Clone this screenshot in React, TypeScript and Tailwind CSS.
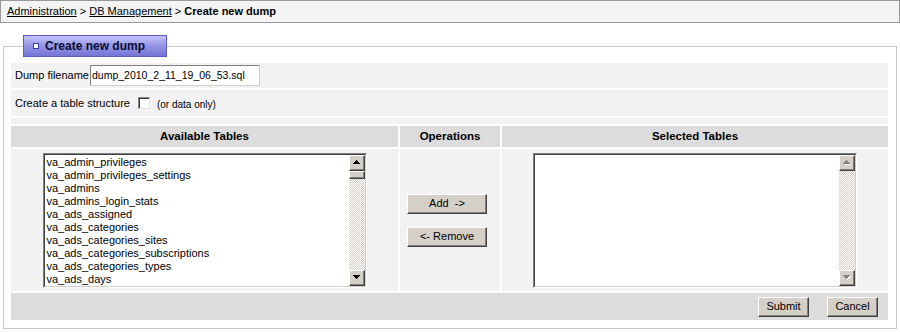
import React from "react";

const tables = [
  "va_admin_privileges",
  "va_admin_privileges_settings",
  "va_admins",
  "va_admins_login_stats",
  "va_ads_assigned",
  "va_ads_categories",
  "va_ads_categories_sites",
  "va_ads_categories_subscriptions",
  "va_ads_categories_types",
  "va_ads_days",
];

const raised =
  "bg-[#d4d0c8] border border-t-white border-l-white border-r-[#404040] border-b-[#404040] shadow-[inset_-1px_-1px_#808080]";

function Arrow({ dir, disabled }: { dir: "up" | "down"; disabled?: boolean }) {
  const rows: [number, number][] = [
    [3, 1],
    [2, 3],
    [1, 5],
    [0, 7],
  ];
  const r = dir === "up" ? rows : [...rows].reverse();
  return (
    <svg width="8" height="5" viewBox="0 0 8 5" shapeRendering="crispEdges">
      {disabled &&
        r.map(([x, w], i) => (
          <rect key={"s" + i} x={x + 1} y={i + 1} width={w} height={1} fill="#ffffff" />
        ))}
      {r.map(([x, w], i) => (
        <rect key={i} x={x} y={i} width={w} height={1} fill={disabled ? "#808080" : "#000000"} />
      ))}
    </svg>
  );
}

function ListBox({ items, disabled }: { items: string[]; disabled?: boolean }) {
  return (
    <div className="w-[324px] h-[135px] border border-t-[#808080] border-l-[#808080] border-r-white border-b-white">
      <div className="h-full flex bg-white border border-t-[#404040] border-l-[#404040] border-r-[#d4d0c8] border-b-[#d4d0c8]">
        <div className="flex-1 overflow-hidden pl-[2px] pt-[1px]">
          {items.map((t) => (
            <div key={t} className="h-[13px] leading-[13px] text-[11px] whitespace-nowrap text-black">
              {t}
            </div>
          ))}
        </div>
        <div className="w-[16px] flex flex-col">
          <div className={raised + " h-[16px] flex items-center justify-center"}>
            <Arrow dir="up" disabled={disabled} />
          </div>
          {!disabled && <div className={raised + " h-[8px]"} />}
          <div className="flex-1 bg-[repeating-conic-gradient(#d4d0c8_0%_25%,#ffffff_0%_50%)] bg-size-[2px_2px]" />
          <div className={raised + " h-[16px] flex items-center justify-center"}>
            <Arrow dir="down" disabled={disabled} />
          </div>
        </div>
      </div>
    </div>
  );
}

function Btn({ children, w }: { children: React.ReactNode; w: string }) {
  return (
    <div className={raised + " " + w + " h-[20px] flex items-center justify-center text-[11px] text-black whitespace-pre"}>
      {children}
    </div>
  );
}

export default function App() {
  return (
    <div className="w-[900px] h-[332px] bg-white font-['Liberation_Sans',Arial,sans-serif] text-black text-[11px]">
      <div className="h-[23px] border border-[#999999] bg-[#f4f4f4] flex items-center pl-[6px] text-[11px]">
        <span className="underline">Administration</span>
        <span>&nbsp;&gt;&nbsp;</span>
        <span className="underline">DB Management</span>
        <span>&nbsp;&gt;&nbsp;</span>
        <span className="font-bold">Create new dump</span>
      </div>

      <fieldset className="mt-[12px] mx-[3px] border border-[#c8c8c8] pl-[7px] pr-[8px] pt-[6px] pb-[8px]">
        <legend className="ml-[12px] p-0">
          <div className="w-[144px] h-[22px] flex items-center border border-[#5c5cc4] bg-gradient-to-b from-[#c4c4f6] via-[#9494e6] to-[#7474d4]">
            <div className="ml-[9px] w-[6px] h-[6px] border border-[#3a3aa8] bg-white" />
            <span className="ml-[6px] text-[12px] font-bold text-[#0c0c30]">Create new dump</span>
          </div>
        </legend>

        <div className="flex flex-col gap-[2px]">
          <div className="h-[25px] bg-[#f2f2f2] flex items-center pl-[4px] gap-[1px]">
            <span>Dump filename</span>
            <div className="w-[170px] h-[21px] bg-white border border-t-[#808080] border-l-[#808080] border-r-[#d4d0c8] border-b-[#d4d0c8] flex items-center pl-[1px] text-[10.5px] whitespace-nowrap overflow-hidden">
              dump_2010_2_11_19_06_53.sql
            </div>
          </div>

          <div className="h-[26px] bg-[#f2f2f2] flex items-center pl-[4px]">
            <span>Create a table structure</span>
            <div className="ml-[8px] w-[12px] h-[12px] bg-white border border-t-[#808080] border-l-[#808080] border-r-[#e4e4e4] border-b-[#e4e4e4] shadow-[inset_1px_1px_#404040]" />
            <span className="ml-[7px] text-[10px] mt-[2px]">(or data only)</span>
          </div>

          <div className="h-[6px] bg-[#f2f2f2]" />

          <div className="grid grid-cols-[387px_100px_1fr] gap-[2px]">
            <div className="h-[21px] bg-[#dcdcdc] flex items-center justify-center font-bold text-[11.5px]">Available Tables</div>
            <div className="h-[21px] bg-[#dcdcdc] flex items-center justify-center font-bold text-[11.5px]">Operations</div>
            <div className="h-[21px] bg-[#dcdcdc] flex items-center justify-center font-bold text-[11.5px]">Selected Tables</div>

            <div className="h-[142px] bg-[#f2f2f2] flex items-center justify-center">
              <ListBox items={tables} />
            </div>
            <div className="h-[142px] bg-[#f2f2f2] flex flex-col items-center justify-center gap-[13px] pr-[6px]">
              <Btn w="w-[80px]">Add  -&gt;</Btn>
              <Btn w="w-[80px]">&lt;- Remove</Btn>
            </div>
            <div className="h-[142px] bg-[#f2f2f2] flex items-center justify-center">
              <ListBox items={[]} disabled />
            </div>
          </div>

          <div className="h-[27px] bg-[#dcdcdc] flex items-center justify-end pr-[10px] gap-[18px]">
            <Btn w="w-[51px]">Submit</Btn>
            <Btn w="w-[51px]">Cancel</Btn>
          </div>
        </div>
      </fieldset>
    </div>
  );
}
